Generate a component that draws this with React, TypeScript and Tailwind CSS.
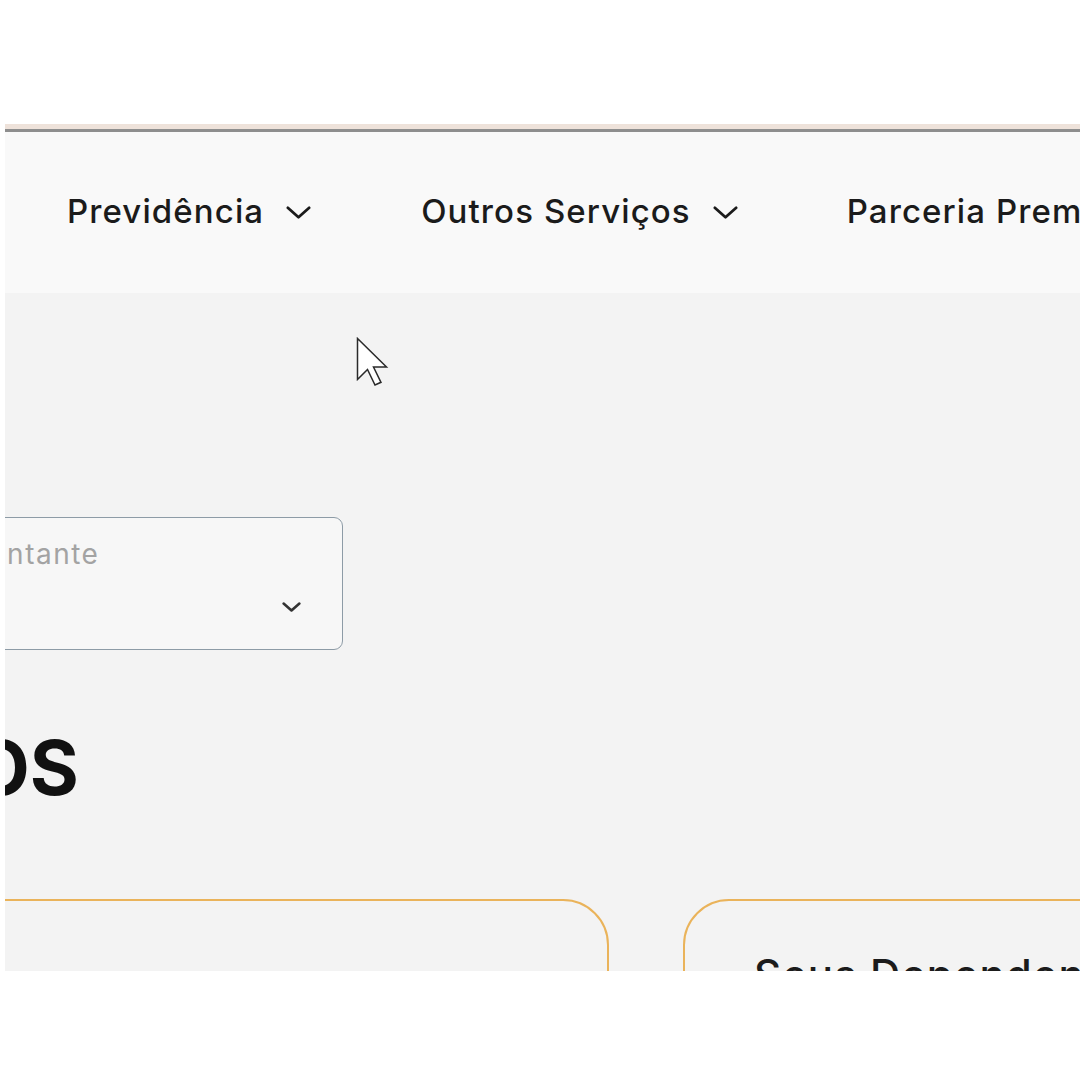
const NAV = [
  { label: 'Previdência', chevron: true, ml: '' },
  { label: 'Outros Serviços', chevron: true, ml: 'ml-[109px]' },
  { label: 'Parceria Premium', chevron: false, ml: 'ml-[108px]' },
];

function Chevron({ w, h, stroke, className }: { w: number; h: number; stroke: number; className?: string }) {
  return (
    <svg width={w} height={h} viewBox={`0 0 ${w} ${h}`} className={className} fill="none">
      <polyline
        points={`${stroke},${stroke} ${w / 2},${h - stroke} ${w - stroke},${stroke}`}
        stroke="currentColor"
        strokeWidth={stroke}
        strokeLinecap="round"
        strokeLinejoin="round"
      />
    </svg>
  );
}

function Cursor() {
  return (
    <svg className="absolute left-[356px] top-[337px]" width="34" height="50" viewBox="0 0 34 50">
      <path
        d="M1.5 1.5 L1.5 42.5 L11.5 32.5 L19 48 L25 45.3 L17.5 30 L30.5 30 Z"
        fill="#fff"
        stroke="#2a2a2a"
        strokeWidth="1.5"
        strokeLinejoin="miter"
      />
    </svg>
  );
}

export default function App() {
  return (
    <div className="relative h-[1080px] w-[1080px] overflow-hidden bg-white font-['Inter',sans-serif]">
      <div className="pl-[5px] pt-[124px]">
        <div className="h-[847px] overflow-hidden bg-[#f3f3f3]">
          <div className="h-[5px] bg-[#eee2da]" />
          <div className="h-[3px] bg-[#8e8e8e]" />
          <nav className="flex h-[161px] items-center bg-[#f9f9f9] pl-[62px] pb-[2px]">
            {NAV.map((n) => (
              <div key={n.label} className={`flex flex-none items-center gap-[21px] ${n.ml}`}>
                <span className="whitespace-nowrap text-[33px] font-medium tracking-[1.1px] text-[#1b1b1b]">{n.label}</span>
                {n.chevron && <Chevron w={27} h={15} stroke={2.8} className="mt-[2px] text-[#1b1b1b]" />}
              </div>
            ))}
          </nav>

          <div className="pt-[224px]">
            <div className="-ml-[138px] flex h-[133px] w-[476px] flex-col justify-between rounded-[9px] border border-[#8d9ba6] bg-[#f7f7f7] pb-[36px] pl-[20px] pr-[40px] pt-[15px]">
              <span className="whitespace-nowrap text-[28px] tracking-[1.5px] text-[#a3a3a3]">Representante</span>
              <div className="flex justify-end">
                <Chevron w={21} h={12} stroke={2.6} className="text-[#333]" />
              </div>
            </div>

            <h1 className="-ml-[308px] mt-[80px] whitespace-nowrap text-[75px] leading-none font-bold text-[#111]">
              SERVIÇOS
            </h1>

            <div className="mt-[94px] flex gap-[74px]">
              <div className="-ml-[120px] h-[200px] w-[724px] flex-none rounded-[46px] border-2 border-[#eab35a]" />
              <div className="h-[200px] w-[500px] flex-none rounded-[46px] border-2 border-[#eab35a] pl-[69px] pt-[42px]">
                <span className="whitespace-nowrap text-[42px] font-medium tracking-[1px] text-[#1b1b1b]">Seus Dependentes</span>
              </div>
            </div>
          </div>
        </div>
      </div>
      <Cursor />
    </div>
  );
}
